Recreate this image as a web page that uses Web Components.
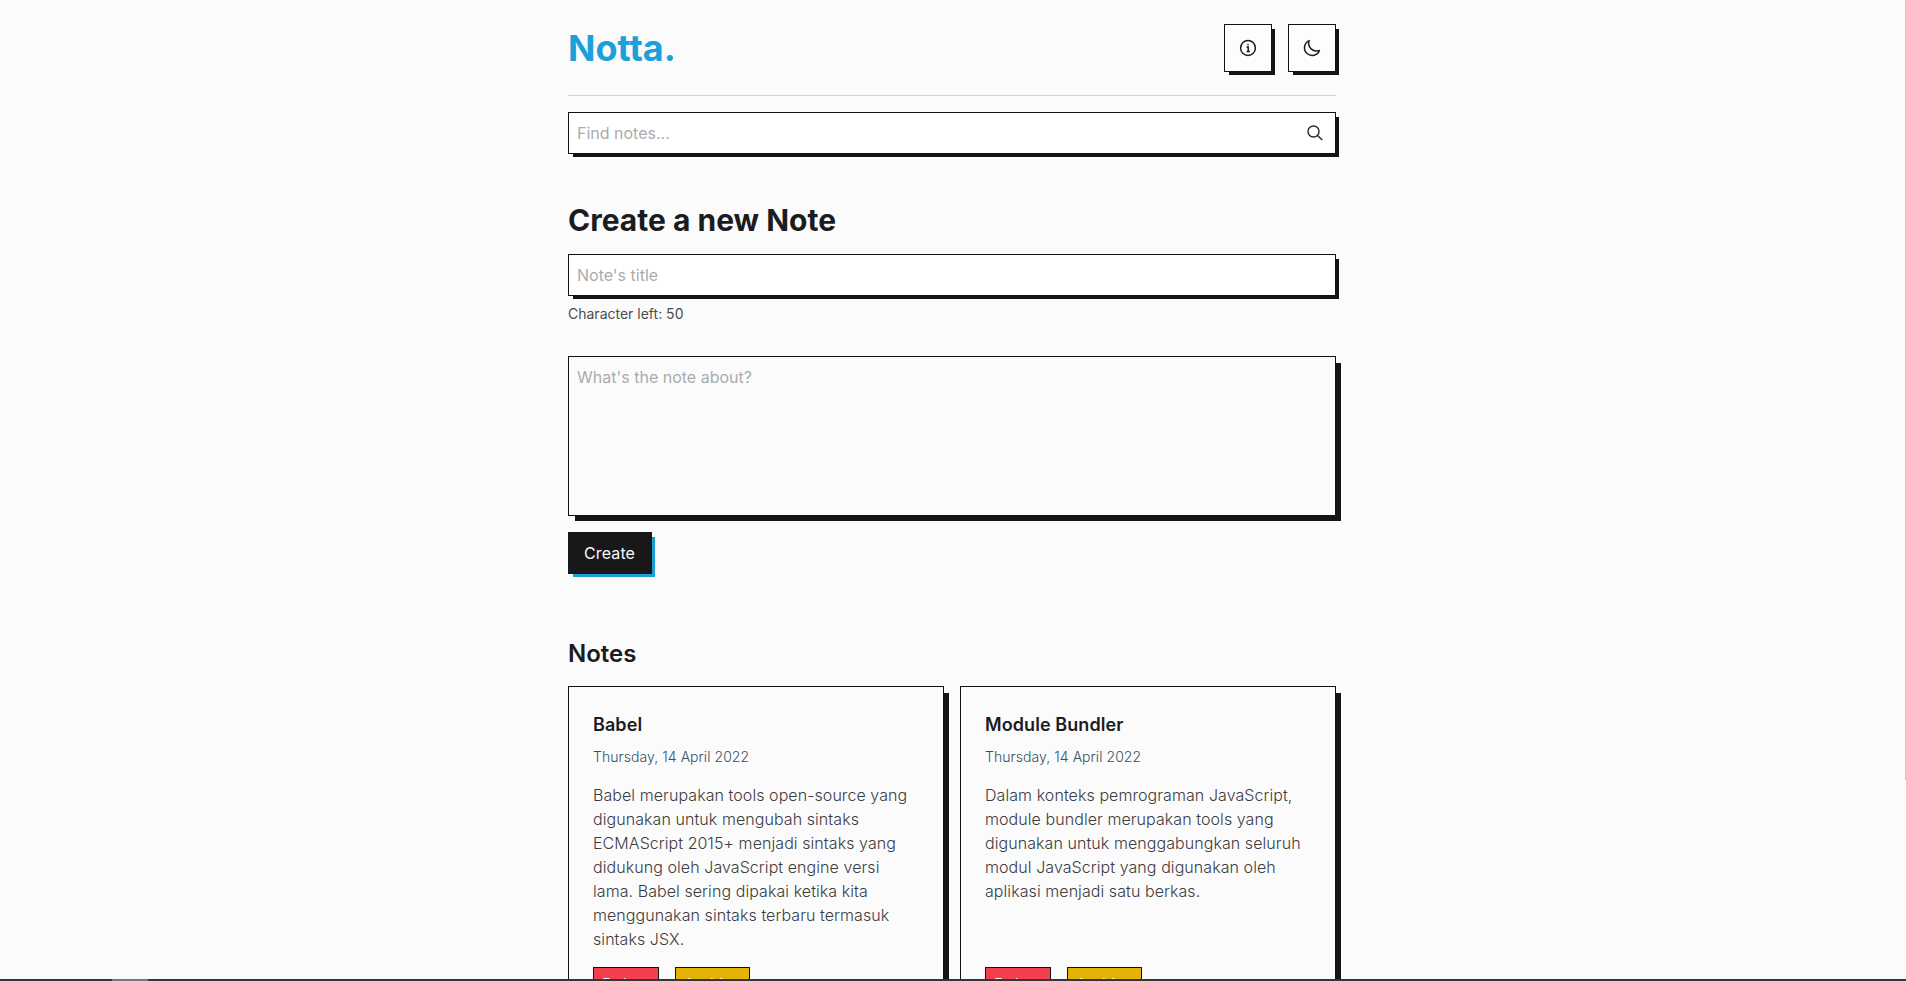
<!DOCTYPE html>
<html lang="en">
<head>
<meta charset="utf-8">
<title>Notta.</title>
<style>
html,body{margin:0;height:100%;overflow:hidden;background:#fbfbfb}
body{font-family:Inter,"Liberation Sans",sans-serif;font-size:16px;line-height:24px;color:#1c1c1f}
</style>
</head>
<body>
<notta-app></notta-app>
<script>
const define=(name,html)=>customElements.define(name,class extends HTMLElement{
  constructor(){
    super();
    const t=document.createElement('template');
    t.innerHTML=html;
    this.attachShadow({mode:'open'}).append(t.content.cloneNode(true));
  }
});

define('icon-button',`<style>
:host{display:flex;box-sizing:border-box;width:48px;height:48px;align-items:center;justify-content:center;border:1px solid #111;background:#fdfdfd;box-shadow:4px 4px 0 -1px #151515}
</style><slot></slot>`);

define('text-field',`<style>
:host{display:flex;box-sizing:border-box;height:42px;padding:0 12px 0 8px;align-items:center;justify-content:space-between;border:1px solid #111;background:#fff;color:#ababae;font-weight:400;box-shadow:4px 4px 0 -1px #151515}
:host([multiline]){height:160px;padding-top:8px;align-items:flex-start;background:#fbfbfb;box-shadow:6px 6px 0 -1px #151515}
</style><span><slot></slot></span><slot name="icon"></slot>`);

define('action-button',`<style>
:host{display:block;box-sizing:border-box;width:84px;padding:9px 16px;background:#18181b;color:#fafafa;letter-spacing:.12px;box-shadow:4px 4px 0 -1px #1ba0d2}
</style><slot></slot>`);

define('card-button',`<style>
:host{display:block;box-sizing:border-box;width:66px;height:34px;padding:4px 8px;border:1px solid #111;background:#f43f4e;color:#fafafa;white-space:nowrap}
:host([kind=archive]){width:75px;background:#e5b106}
</style><slot></slot>`);

define('note-card',`<style>
:host{display:flex;flex-direction:column;box-sizing:border-box;padding:24px;border:1px solid #111;background:#fbfbfc;box-shadow:6px 6px 0 -1px #151515}
h3{margin:0;font-size:18px;line-height:28px;font-weight:600;letter-spacing:.08px}
.date{margin-top:8px;font-size:14px;line-height:20px;font-weight:300;letter-spacing:.06px;color:#34525e}
p{margin:16px 0 0;font-weight:300;letter-spacing:.07px;color:#3c3c40;flex:1}
.actions{display:flex;gap:16px;margin-top:16px}
</style>
<h3><slot name="title"></slot></h3>
<div class="date"><slot name="date"></slot></div>
<p><slot></slot></p>
<div class="actions"><card-button>Delete</card-button><card-button kind="archive">Archive</card-button></div>`);

define('notta-app',`<style>
:host{display:grid;grid-template-columns:1fr 768px 1fr;box-sizing:border-box;height:100vh;padding-right:2px;overflow:hidden;position:relative}
main{grid-column:2;min-width:0}
header{display:flex;align-items:center;box-sizing:border-box;height:96px;border-bottom:1px solid #d4d4d8;margin-bottom:16px}
h1{margin:0 auto 0 0;font-size:36px;line-height:40px;font-weight:700;font-variant-ligatures:none;letter-spacing:.02px;color:#1ba0dc}
header icon-button+icon-button{margin-left:16px}
h2{margin:48px 0 16px;font-size:30px;line-height:36px;font-weight:700}
.count{margin:8px 0 32px;font-size:14px;line-height:20px;font-weight:400;color:#4c4c52}
action-button{margin-top:16px}
h2.notes{font-size:24px;line-height:32px;margin:64px 0 16px;font-weight:600}
.grid{display:grid;grid-template-columns:1fr 1fr;gap:16px}
svg{display:block;fill:none;stroke:currentColor}
text-field svg{color:#27272a}
.scroll{position:absolute;right:0;top:0;width:1px;height:780px;background:#c9c9c9}
.edge{position:absolute;left:0;right:0;bottom:0;height:2px;background:linear-gradient(90deg,transparent 112px,#777 112px 148px,transparent 148px) #333635}
</style>
<main>
<header><h1>Notta.</h1>
<icon-button><svg width="18" height="18" viewBox="0 0 18 18" stroke-width="1.5"><circle cx="9" cy="9" r="7.4"/><path d="M7.5 8h1.7v4.2M7.6 12.4h3.3M9 5v1.2"/></svg></icon-button>
<icon-button><svg width="18" height="18" viewBox="0 0 18 18" stroke-width="1.5" stroke-linejoin="round"><path d="M6.2 1.6a7.7 7.7 0 1 0 10.2 9.8A7.7 7.7 0 0 1 6.2 1.6z"/></svg></icon-button>
</header>
<text-field>Find notes...<svg slot="icon" width="16" height="16" viewBox="0 0 16 16" stroke-width="1.4"><circle cx="6.5" cy="6.5" r="5.5"/><path d="M10.5 10.5l4.8 4.6"/></svg></text-field>
<h2>Create a new Note</h2>
<text-field>Note's title</text-field>
<div class="count">Character left: 50</div>
<text-field multiline>What's the note about?</text-field>
<action-button>Create</action-button>
<h2 class="notes">Notes</h2>
<div class="grid">
<note-card><span slot="title">Babel</span><span slot="date">Thursday, 14 April 2022</span>Babel merupakan tools open-source yang digunakan untuk mengubah sintaks ECMAScript 2015+ menjadi sintaks yang didukung oleh JavaScript engine versi lama. Babel sering dipakai ketika kita menggunakan sintaks terbaru termasuk sintaks JSX.</note-card>
<note-card><span slot="title">Module Bundler</span><span slot="date">Thursday, 14 April 2022</span>Dalam konteks pemrograman JavaScript, module bundler merupakan tools yang digunakan untuk menggabungkan seluruh modul JavaScript yang digunakan oleh aplikasi menjadi satu berkas.</note-card>
</div>
</main>
<div class="scroll"></div><div class="edge"></div>`);
</script>
</body>
</html>
